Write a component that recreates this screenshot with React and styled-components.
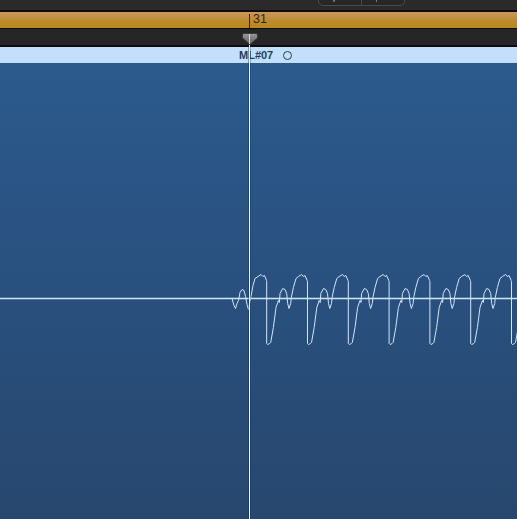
import React from "react";
import styled, { createGlobalStyle } from "styled-components";

const Global = createGlobalStyle`
  html, body { margin: 0; padding: 0; background: #2a2a2a; }
  body { font-family: "Liberation Sans", Arial, sans-serif; }
`;

const Editor = styled.div`
  position: relative;
  width: 517px;
  height: 519px;
  overflow: hidden;
  display: flex;
  flex-direction: column;
  background: #2a2a2a;
`;

const TopBar = styled.div`
  height: 10px;
  flex: none;
  display: flex;
  align-items: flex-end;
  padding-left: 318px;
  background: #2a2a2a;
  overflow: hidden;
`;

const Segmented = styled.div`
  display: flex;
  width: 87px;
  height: 20px;
  margin-bottom: 4px;
  box-sizing: border-box;
  border: 1px solid #4a4a4a;
  border-radius: 5px;
  background: #272727;
  overflow: hidden;
`;

const Segment = styled.div`
  flex: 1;
  position: relative;
  border-left: ${(p) => (p.$first ? "none" : "1px solid #4a4a4a")};
`;

const Glyph = styled.span`
  position: absolute;
  bottom: 3px;
  left: ${(p) => p.$x}px;
  width: ${(p) => p.$w}px;
  height: 3px;
  background: #7a7a7a;
  border-radius: 1px;
`;

const Rule = styled.div`
  height: ${(p) => p.$h}px;
  flex: none;
  background: #0d0d0d;
`;

const Ruler = styled.div`
  position: relative;
  height: 16px;
  flex: none;
  background: linear-gradient(
    #ca975c 0%,
    #c59048 30%,
    #bd8c2c 55%,
    #b7891f 100%
  );
`;

const RulerTick = styled.div`
  position: absolute;
  left: 249px;
  top: 2px;
  width: 1px;
  height: 14px;
  background: #2e2410;
`;

const BarNumber = styled.span`
  position: absolute;
  left: 253px;
  top: 0px;
  font-size: 12.5px;
  line-height: 14px;
  color: #33250b;
`;

const Track = styled.div`
  position: relative;
  height: 16px;
  flex: none;
  background: #262626;
`;

const Marker = styled.svg`
  position: absolute;
  left: 242px;
  top: 4px;
`;

const RegionHeader = styled.div`
  height: 16px;
  flex: none;
  display: flex;
  align-items: center;
  gap: 10px;
  padding-left: 239px;
  background: #c4dffb;
`;

const RegionName = styled.span`
  font-size: 11px;
  font-weight: bold;
  color: #1f3d63;
`;

const LoopDot = styled.span`
  width: 7px;
  height: 7px;
  border: 1px solid #1f3d63;
  border-radius: 50%;
`;

const RegionBody = styled.div`
  flex: 1;
  background: linear-gradient(#2b5a8d 0%, #29507e 50%, #27476e 100%);
`;

const Wave = styled.svg`
  display: block;
`;

const PlayheadLine = styled.div`
  position: absolute;
  left: 249px;
  top: 45px;
  bottom: 0;
  width: 1px;
  background: #eef3f9;
  box-shadow: -1px 0 0 rgba(20, 40, 70, 0.35), 1px 0 0 rgba(20, 40, 70, 0.25);
`;

// One cycle of the signal, offsets from the sharp downward edge.
const cycle = [
  [0, 343], [1, 344], [3, 343], [4, 342], [6.7, 327], [9.3, 307],
  [11.7, 300], [12.7, 302], [13.3, 293], [16, 288], [18.3, 289],
  [20, 293], [21, 303], [22.3, 308], [24, 303], [24.6, 297],
  [26.7, 287], [29.3, 278], [31.7, 276], [35, 274], [36.7, 276],
  [38.3, 275], [40.5, 280],
];

const lead = [
  [232, 298], [234, 305], [235.5, 308], [237, 303], [238.5, 300],
  [240, 292], [242, 289], [244, 290], [245.5, 296], [247, 304],
  [248.5, 309], [249.5, 303], [251, 296], [253, 285], [255, 278],
  [258, 276], [261, 274], [263, 276], [264.5, 275], [266.5, 280],
];

const TOP = 63;

function buildWave() {
  const pts = [...lead];
  const period = 40.8;
  for (let d = 266.7; d < 530; d += period) {
    pts.push([d, 281]);
    cycle.forEach(([dx, y]) => pts.push([d + dx, y]));
  }
  return pts.map(([x, y]) => `${x.toFixed(1)},${(y - TOP + 0.5).toFixed(1)}`).join(" ");
}

const wavePoints = buildWave();

export default function App() {
  return (
    <>
      <Global />
      <Editor>
        <TopBar>
          <Segmented>
            <Segment $first>
              <Glyph $x={14} $w={2} />
            </Segment>
            <Segment>
              <Glyph $x={14} $w={1} />
            </Segment>
          </Segmented>
        </TopBar>
        <Rule $h={2} />
        <Ruler>
          <RulerTick />
          <BarNumber>31</BarNumber>
        </Ruler>
        <Rule $h={1} />
        <Track>
          <Marker width="16" height="12" viewBox="0 0 16 12">
            <defs>
              <linearGradient id="mk" x1="0" y1="0" x2="0" y2="1">
                <stop offset="0" stopColor="#9a9a9a" />
                <stop offset="1" stopColor="#5c5c5c" />
              </linearGradient>
            </defs>
            <path
              d="M2 0.5 H14 Q15.5 0.5 15.5 2 V5 L8 11.5 L0.5 5 V2 Q0.5 0.5 2 0.5 Z"
              fill="url(#mk)"
              stroke="#3a3a3a"
              strokeWidth="1"
            />
            <rect x="7" y="1" width="1" height="10" fill="#d8d8d8" />
          </Marker>
        </Track>
        <Rule $h={2} />
        <RegionHeader>
          <RegionName>ML#07</RegionName>
          <LoopDot />
        </RegionHeader>
        <RegionBody>
          <Wave width="517" height="456" viewBox="0 0 517 456">
            <line x1="0" y1={298 - TOP + 0.5} x2="517" y2={298 - TOP + 0.5} stroke="#d2e5ff" strokeWidth="1.4" />
            <polyline points={wavePoints} fill="none" stroke="#d2e5ff" strokeWidth="1" strokeLinejoin="round" />
          </Wave>
        </RegionBody>
        <PlayheadLine />
      </Editor>
    </>
  );
}
